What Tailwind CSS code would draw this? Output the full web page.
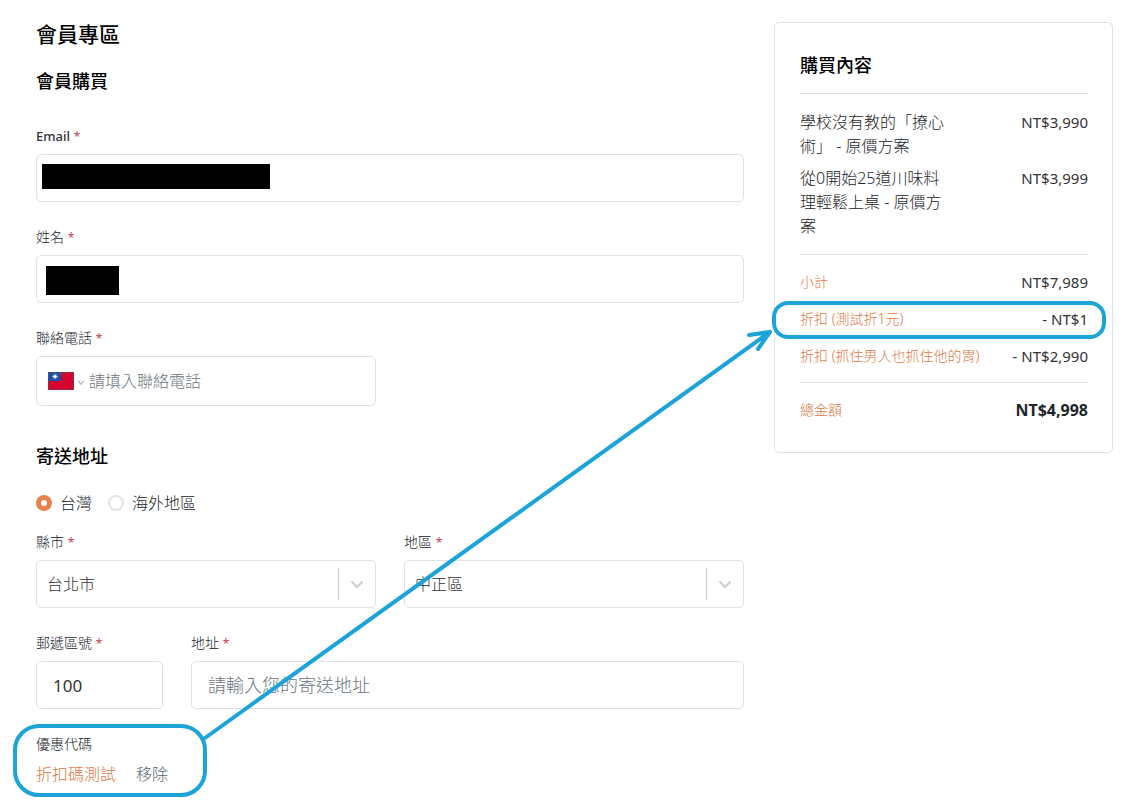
<!DOCTYPE html>
<html lang="zh-Hant">
<head>
  <meta charset="UTF-8">
  <meta name="viewport" content="width=device-width, initial-scale=1.0">
  <title>會員專區</title>
  <script src="https://cdn.jsdelivr.net/npm/@tailwindcss/browser@4"></script>
</head>
<body class="bg-white font-['Noto_Sans','Noto_Sans_CJK_TC',sans-serif] text-base text-[#333]">
  <div class="relative">
    <main class="grid grid-cols-[708fr_339fr] items-start gap-[30px] pl-9 pr-6">

      <form class="pt-[19px] pb-4">
        <h1 class="text-[21px] leading-[30px] font-medium text-black">會員專區</h1>
        <h2 class="mt-5 text-lg leading-6 font-medium text-black">會員購買</h2>

        <label for="email" class="mt-[33px] block text-sm leading-5"><span class="text-[13px] font-medium">Email</span> <span class="text-xs text-[#c8414b]">*</span></label>
        <div class="relative mt-2">
          <input id="email" type="email" class="block h-12 w-full rounded-[5px] border border-[#dee2e6] px-4">
          <span class="absolute top-[10px] left-[6px] h-[25px] w-[228px] bg-black"></span>
        </div>

        <label for="name" class="mt-[25px] block text-sm leading-5 font-light text-[#212529]">姓名 <span class="text-xs font-normal text-[#c8414b]">*</span></label>
        <div class="relative mt-2">
          <input id="name" type="text" class="block h-12 w-full rounded-[5px] border border-[#dee2e6] px-4">
          <span class="absolute top-[11px] left-[10px] h-[29px] w-[73px] bg-black"></span>
        </div>

        <label for="phone" class="mt-[25px] block text-sm leading-5 font-light text-[#212529]">聯絡電話 <span class="text-xs font-normal text-[#c8414b]">*</span></label>
        <div class="mt-2 grid grid-cols-2 gap-7">
          <div class="flex h-[50px] items-center rounded-[5px] border border-[#dee2e6] pl-[11px]">
            <button type="button" aria-label="國碼" class="flex items-center gap-[3px]">
              <svg class="h-[18px] w-[26px]" viewBox="0 0 26 18">
                <rect width="26" height="18" fill="#d4042d"/>
                <rect width="13" height="9" fill="#1f4fa5"/>
                <path d="M7 1.5v6M4 4.5h6M5 2.5l4 4M9 2.5l-4 4" stroke="#a9c8f5" stroke-width="0.8"/>
                <circle cx="7" cy="4.5" r="1.6" fill="#fff"/>
                <rect x="0.5" y="0.5" width="25" height="17" fill="none" stroke="#55506e" stroke-opacity="0.5"/>
              </svg>
              <svg class="mt-0.5 h-[7px] w-2" viewBox="0 0 8 7" fill="none" stroke="#999"><path d="M1 1.5l3 4 3-4"/></svg>
            </button>
            <input id="phone" type="tel" placeholder="請填入聯絡電話" class="ml-1 min-w-0 flex-1 font-light outline-none placeholder:text-[#6c757d]">
          </div>
        </div>

        <h2 class="mt-[38px] text-lg leading-6 font-medium text-black">寄送地址</h2>
        <div class="mt-[23px] flex gap-4 leading-6 font-light text-[#212529]">
          <label class="flex items-center gap-2">
            <input type="radio" name="region" checked class="size-4 appearance-none rounded-full border-2 border-[#e3e5e8] checked:border-5 checked:border-[#e8834f]">
            台灣
          </label>
          <label class="flex items-center gap-2">
            <input type="radio" name="region" class="size-4 appearance-none rounded-full border-2 border-[#e3e5e8] checked:border-5 checked:border-[#e8834f]">
            海外地區
          </label>
        </div>

        <div class="mt-[17px] grid grid-cols-2 gap-7">
          <div>
            <label for="city" class="block text-sm leading-5 font-light text-[#212529]">縣市 <span class="text-xs font-normal text-[#c8414b]">*</span></label>
            <div class="relative mt-2">
              <select id="city" class="block h-12 w-full appearance-none rounded-[5px] border border-[#dee2e6] pl-[10px] font-light">
                <option>台北市</option>
              </select>
              <span class="pointer-events-none absolute inset-y-2 right-0 flex w-[38px] items-center border-l border-[#ccc] pl-2">
                <svg class="size-5" viewBox="0 0 20 20" fill="none" stroke="#ccc" stroke-width="2" stroke-linecap="round"><path d="M5 8l5 5 5-5"/></svg>
              </span>
            </div>
          </div>
          <div>
            <label for="district" class="block text-sm leading-5 font-light text-[#212529]">地區 <span class="text-xs font-normal text-[#c8414b]">*</span></label>
            <div class="relative mt-2">
              <select id="district" class="block h-12 w-full appearance-none rounded-[5px] border border-[#dee2e6] pl-[10px] font-light">
                <option>中正區</option>
              </select>
              <span class="pointer-events-none absolute inset-y-2 right-0 flex w-[38px] items-center border-l border-[#ccc] pl-2">
                <svg class="size-5" viewBox="0 0 20 20" fill="none" stroke="#ccc" stroke-width="2" stroke-linecap="round"><path d="M5 8l5 5 5-5"/></svg>
              </span>
            </div>
          </div>
        </div>

        <div class="mt-[25px] flex gap-7">
          <div class="w-[127px]">
            <label for="zip" class="block text-sm leading-5 font-light text-[#212529]">郵遞區號 <span class="text-xs font-normal text-[#c8414b]">*</span></label>
            <input id="zip" type="text" value="100" class="mt-2 block h-12 w-full rounded-[5px] border border-[#dee2e6] px-4 text-[17px]">
          </div>
          <div class="flex-1">
            <label for="address" class="block text-sm leading-5 font-light text-[#212529]">地址 <span class="text-xs font-normal text-[#c8414b]">*</span></label>
            <input id="address" type="text" placeholder="請輸入您的寄送地址" class="mt-2 block h-12 w-full rounded-[5px] border border-[#dee2e6] px-4 text-lg font-light placeholder:text-[#6c757d]">
          </div>
        </div>

        <div class="relative mt-[25px] w-[170px] font-light">
          <p class="text-sm leading-5 text-[#212529]">優惠代碼</p>
          <p class="mt-2 flex gap-5 leading-6">
            <span class="text-[#e07843]">折扣碼測試</span>
            <button type="button" class="text-[#5c656d]">移除</button>
          </p>
          <span class="pointer-events-none absolute -top-[10px] -bottom-[11px] -left-[23px] w-[194px] rounded-[26px] border-4 border-[#1ca3d8]"></span>
        </div>
      </form>

      <aside class="mt-[22px] rounded-[5px] border border-[#dee2e6] py-[30px] pr-6 pl-[25px]">
        <h2 class="text-lg leading-6 font-medium text-black">購買內容</h2>
        <ul class="mt-4 space-y-2 border-t border-[#dee2e6] pt-4 leading-6">
          <li class="flex items-start justify-between">
            <span class="w-[52%] font-light text-[#212529]">學校沒有教的「撩心術」 - 原價方案</span>
            <span class="text-[15px] leading-6">NT$3,990</span>
          </li>
          <li class="flex items-start justify-between">
            <span class="w-[52%] font-light text-[#212529]">從0開始25道川味料理輕鬆上桌 - 原價方案</span>
            <span class="text-[15px] leading-6">NT$3,999</span>
          </li>
        </ul>
        <dl class="mt-4 space-y-[13px] border-t border-[#dee2e6] pt-[15px] text-[15px] leading-6">
          <div class="flex justify-between">
            <dt class="text-sm leading-6 font-light text-[#e07843]">小計</dt>
            <dd>NT$7,989</dd>
          </div>
          <div class="relative flex justify-between">
            <dt class="text-sm leading-6 font-light text-[#e07843]">折扣 (測試折1元)</dt>
            <dd>- NT$1</dd>
            <span class="pointer-events-none absolute -top-1.5 -right-[18px] -bottom-2 -left-7 rounded-2xl border-4 border-[#1ca3d8]"></span>
          </div>
          <div class="flex justify-between">
            <dt class="text-sm leading-6 font-light text-[#e07843]">折扣 (抓住男人也抓住他的胃)</dt>
            <dd>- NT$2,990</dd>
          </div>
        </dl>
        <dl class="mt-[14px] flex justify-between border-t border-[#dee2e6] pt-[15px] leading-6">
          <dt class="text-sm leading-6 font-light text-[#e07843]">總金額</dt>
          <dd class="font-bold text-[#212529]">NT$4,998</dd>
        </dl>
      </aside>
    </main>

    <!-- arrow from the coupon code to its discount row -->
    <svg class="pointer-events-none absolute top-0 left-0 h-[801px] w-[1137px]" viewBox="0 0 1137 801" fill="none" stroke="#1ca3d8" stroke-width="4" stroke-linecap="round" stroke-linejoin="round">
      <path d="M205 738L770 332M749 335l21-3-12 17"/>
    </svg>
  </div>
</body>
</html>
